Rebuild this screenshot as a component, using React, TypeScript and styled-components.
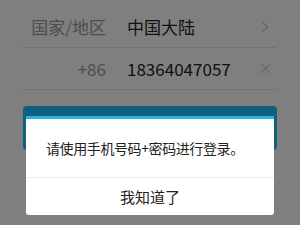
import React from 'react';
import styled, { createGlobalStyle } from 'styled-components';

const GlobalStyle = createGlobalStyle`
  html, body {
    margin: 0;
    padding: 0;
    background: #ffffff;
    font-family: "Noto Sans CJK SC", "Noto Sans", sans-serif;
  }
`;

const Page = styled.div`
  width: 300px;
  height: 225px;
  overflow: hidden;
  padding: 6px 24px 0 23px;
  box-sizing: border-box;
  background: #ffffff;
`;

const Row = styled.div`
  display: flex;
  align-items: center;
  height: 42px;
  box-sizing: border-box;
  border-bottom: 1px solid #e4e4e4;
`;

const Label = styled.div`
  width: 83px;
  flex-shrink: 0;
  text-align: right;
  padding-right: 21px;
  font-size: 17px;
  color: #9a9a9a;
`;

const Value = styled.div`
  flex: 1;
  font-size: 17px;
  color: #222222;
`;

const Trail = styled.div`
  width: 22px;
  display: flex;
  justify-content: center;
  align-items: center;
  color: #cfcfcf;
`;

const LoginButton = styled.div`
  margin-top: 16px;
  margin-right: -1px;
  height: 44px;
  border-radius: 4px;
  background: #1ebeff;
`;

const Overlay = styled.div`
  position: fixed;
  inset: 0;
  background: rgba(0, 0, 0, 0.5);
`;

const Dialog = styled.div`
  position: fixed;
  top: 116px;
  left: 26px;
  width: 248px;
  background: #ffffff;
  border-top: 3px solid #2cb0e2;
  border-radius: 0 0 3px 3px;
  display: flex;
  flex-direction: column;
`;

const Message = styled.div`
  height: 58px;
  display: flex;
  align-items: center;
  padding: 0 0 0 20px;
  font-size: 14px;
  letter-spacing: -0.4px;
  color: #222222;
  border-bottom: 1px solid #ececec;
`;

const Confirm = styled.div`
  height: 37px;
  display: flex;
  align-items: center;
  justify-content: center;
  font-size: 15px;
  color: #222222;
`;

const Chevron = () => (
  <svg width="8" height="12" viewBox="0 0 8 12" fill="none">
    <path d="M1.5 1 L6.5 6 L1.5 11" stroke="currentColor" strokeWidth="1.2" />
  </svg>
);

const Clear = () => (
  <svg width="11" height="11" viewBox="0 0 11 11" fill="none">
    <path d="M1 1 L10 10 M10 1 L1 10" stroke="currentColor" strokeWidth="1.2" />
  </svg>
);

const App: React.FC = () => (
  <>
    <GlobalStyle />
    <Page>
      <Row>
        <Label>国家/地区</Label>
        <Value>中国大陆</Value>
        <Trail><Chevron /></Trail>
      </Row>
      <Row>
        <Label>+86</Label>
        <Value>18364047057</Value>
        <Trail><Clear /></Trail>
      </Row>
      <LoginButton />
    </Page>
    <Overlay />
    <Dialog>
      <Message>请使用手机号码+密码进行登录。</Message>
      <Confirm>我知道了</Confirm>
    </Dialog>
  </>
);

export default App;
